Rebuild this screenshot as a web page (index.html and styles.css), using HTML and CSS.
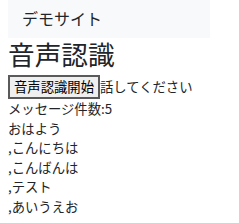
FILE: index.html
```html
<!DOCTYPE html>
<html lang="ja">
<head>
  <meta charset="UTF-8" />
  <title>音声認識</title>
  <link rel="stylesheet" href="styles.css">
</head>
<body>

  <nav class="navbar">
    <span class="brand">デモサイト</span>
  </nav>

  <h1 class="title">音声認識</h1>

  <div class="controls">
    <button id="startBtn">音声認識開始</button><span id="status">話してください</span>
  </div>

  <div id="count">メッセージ件数:5</div>
  <div id="messages">
    <div>おはよう</div>
    <div>,こんにちは</div>
    <div>,こんばんは</div>
    <div>,テスト</div>
    <div>,あいうえお</div>
  </div>

</body>
</html>
```

FILE: styles.css
```css
* {
  box-sizing: border-box;
}

body {
  margin: 0 8px;
  font-family: "Noto Sans CJK JP", "Noto Sans", sans-serif;
  font-size: 13.33px;
  line-height: 19.6px;
  color: #212529;
  background: #fff;
}

.navbar {
  width: 202px;
  height: 38px;
  background: #f8f9fa;
  padding-left: 14px;
  display: flex;
  align-items: center;
}

.brand {
  font-size: 16px;
  color: #212529;
}

.title {
  font-size: 26.67px;
  font-weight: normal;
  line-height: 32px;
  margin: 0;
}

.controls {
  display: flex;
  align-items: center;
  margin-top: 5px;
}

#startBtn {
  font-family: inherit;
  font-size: 13.33px;
  line-height: 18px;
  padding: 0 4px;
  background: #efefef;
  border: 2px solid #5a5a5a;
  color: #000;
  height: 24px;
}
```
